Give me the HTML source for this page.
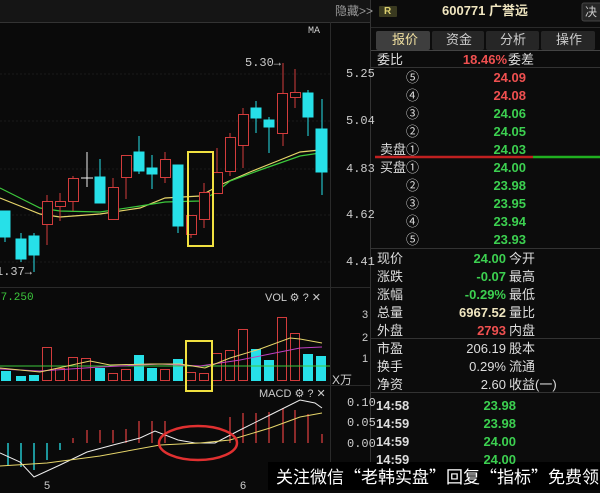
<!DOCTYPE html>
<html><head><meta charset="utf-8"><style>
html,body{margin:0;padding:0;background:#0a0a0a;}
body{width:600px;height:490px;position:relative;overflow:hidden;font-family:"Liberation Sans","Noto Sans CJK SC",sans-serif;}
.t{position:absolute;white-space:nowrap;font-size:12px;line-height:14px;}
.r{text-align:right;}
</style></head><body>
<svg width="600" height="490" style="position:absolute;left:0;top:0" xmlns="http://www.w3.org/2000/svg">
<rect x="0" y="0" width="370" height="22" fill="#151515"/>
<line x1="0" y1="22.5" x2="370" y2="22.5" stroke="#333"/>
<line x1="330.5" y1="22" x2="330.5" y2="490" stroke="#2a2a2a"/>
<line x1="0" y1="287.5" x2="370" y2="287.5" stroke="#2a2a2a"/>
<line x1="0" y1="385.5" x2="370" y2="385.5" stroke="#2a2a2a"/>
<line x1="370.5" y1="0" x2="370.5" y2="490" stroke="#333"/>
<g stroke="#1a1a1a" stroke-dasharray="2,2">
<line x1="0" y1="74" x2="330" y2="74"/><line x1="0" y1="121" x2="330" y2="121"/><line x1="0" y1="169" x2="330" y2="169"/><line x1="0" y1="215" x2="330" y2="215"/><line x1="0" y1="262" x2="330" y2="262"/>
</g>
<polyline fill="none" stroke="#e6d56a" stroke-width="1.2" points="0,198 20,206 40,214 60,217 100,214 140,208 165,198 200,196 220,185 250,172 280,160 300,152 320,150"/>
<polyline fill="none" stroke="#3cc83c" stroke-width="1.2" points="0,188 20,198 40,208 60,211 100,212 140,206 165,202 200,201 215,193 230,181 260,170 300,156 320,153"/>
<g stroke-width="1">
<g fill="#27e0e8" stroke="#27e0e8">
<line x1="5" y1="211" x2="5" y2="242"/><rect x="0" y="211" width="10" height="26"/>
<line x1="21" y1="233" x2="21" y2="262"/><rect x="16" y="239" width="10" height="20"/>
<line x1="34" y1="233" x2="34" y2="272"/><rect x="29" y="236" width="10" height="19"/>
<line x1="100" y1="159" x2="100" y2="203"/><rect x="95" y="177" width="10" height="26"/>
<line x1="139" y1="136" x2="139" y2="174"/><rect x="134" y="152" width="10" height="19"/>
<line x1="152" y1="155" x2="152" y2="189"/><rect x="147" y="168" width="10" height="6"/>
<line x1="178" y1="165" x2="178" y2="233"/><rect x="173" y="165" width="10" height="61"/>
<line x1="256" y1="101" x2="256" y2="133"/><rect x="251" y="108" width="10" height="10"/>
<line x1="269" y1="117" x2="269" y2="153"/><rect x="264" y="120" width="10" height="7"/>
<line x1="308" y1="90" x2="308" y2="136"/><rect x="303" y="93" width="10" height="24"/>
<line x1="322" y1="99" x2="322" y2="195"/><rect x="316" y="129" width="11" height="43"/>
</g>
<g fill="#0a0a0a" stroke="#d23c3c">
<line x1="47" y1="195" x2="47" y2="245"/><rect x="42.5" y="201.5" width="10" height="23"/>
<line x1="60" y1="193" x2="60" y2="221"/><rect x="55.5" y="201.5" width="10" height="5"/>
<line x1="73" y1="176" x2="73" y2="211"/><rect x="68.5" y="178.5" width="10" height="23"/>
<line x1="113" y1="178" x2="113" y2="219"/><rect x="108.5" y="187.5" width="10" height="32"/>
<line x1="126" y1="155" x2="126" y2="199"/><rect x="121.5" y="155.5" width="10" height="22"/>
<line x1="165" y1="152" x2="165" y2="183"/><rect x="160.5" y="159.5" width="10" height="18"/>
<line x1="191" y1="215" x2="191" y2="238"/><rect x="186.5" y="215.5" width="10" height="19"/>
<line x1="204" y1="183" x2="204" y2="228"/><rect x="199.5" y="192.5" width="10" height="27"/>
<line x1="217" y1="148" x2="217" y2="193"/><rect x="212.5" y="172.5" width="10" height="21"/>
<line x1="230" y1="133" x2="230" y2="176"/><rect x="225.5" y="137.5" width="10" height="34"/>
<line x1="243" y1="108" x2="243" y2="168"/><rect x="238.5" y="114.5" width="10" height="31"/>
<line x1="283" y1="63" x2="283" y2="146"/><rect x="277.5" y="93.5" width="10" height="40"/>
<line x1="295" y1="69" x2="295" y2="108"/><rect x="290.5" y="92.5" width="10" height="5"/>
</g>
<line x1="87" y1="152" x2="87" y2="187" stroke="#eee"/><line x1="81" y1="178" x2="93" y2="178" stroke="#eee"/>
</g>
<rect x="188" y="152" width="25" height="94" fill="none" stroke="#f0e040" stroke-width="2"/>
<g fill="#27e0e8">
<rect x="1" y="371" width="10" height="10"/><rect x="16" y="376" width="10" height="5"/><rect x="29" y="375" width="10" height="6"/>
<rect x="95" y="368" width="10" height="13"/><rect x="134" y="355" width="10" height="26"/><rect x="147" y="368" width="10" height="13"/>
<rect x="173" y="359" width="10" height="22"/><rect x="251" y="349" width="10" height="32"/><rect x="264" y="360" width="10" height="21"/>
<rect x="303" y="354" width="10" height="27"/><rect x="316" y="356" width="10" height="25"/>
</g>
<g fill="none" stroke="#d23c3c">
<rect x="42.5" y="347.5" width="9" height="33"/><rect x="55.5" y="368.5" width="9" height="12"/><rect x="68.5" y="357.5" width="9" height="23"/>
<rect x="81.5" y="358.5" width="9" height="22"/><rect x="108.5" y="373.5" width="9" height="7"/><rect x="121.5" y="369.5" width="9" height="11"/>
<rect x="160.5" y="369.5" width="9" height="11"/><rect x="186.5" y="372.5" width="9" height="8"/><rect x="199.5" y="373.5" width="9" height="7"/>
<rect x="212.5" y="353.5" width="9" height="27"/><rect x="225.5" y="350.5" width="9" height="30"/><rect x="238.5" y="329.5" width="9" height="51"/>
<rect x="277.5" y="317.5" width="9" height="63"/><rect x="290.5" y="333.5" width="9" height="47"/>
</g>
<polyline fill="none" stroke="#3cc83c" points="0,366 330,366"/>
<polyline fill="none" stroke="#c040c0" points="0,369 40,371 100,367 160,364 200,366 240,360 270,354 300,348 322,347"/>
<polyline fill="none" stroke="#e6d56a" points="0,368 40,372 90,361 110,365 150,364 180,364 205,368 230,358 260,349 290,338 300,339 322,343"/>
<rect x="186" y="341" width="26" height="50" fill="none" stroke="#f0e040" stroke-width="2"/>
<g stroke="#27e0e8" stroke-width="1.3"><line x1="8" y1="443" x2="8" y2="465"/><line x1="21" y1="443" x2="21" y2="467"/><line x1="34" y1="443" x2="34" y2="470"/><line x1="47" y1="443" x2="47" y2="460"/><line x1="60" y1="443" x2="60" y2="450"/></g>
<g stroke="#d23c3c" stroke-width="1.3">
<line x1="73" y1="443" x2="73" y2="438"/><line x1="87" y1="443" x2="87" y2="430"/><line x1="100" y1="443" x2="100" y2="430"/><line x1="113" y1="443" x2="113" y2="430"/><line x1="126" y1="443" x2="126" y2="429"/><line x1="139" y1="443" x2="139" y2="421"/><line x1="152" y1="443" x2="152" y2="421"/><line x1="165" y1="443" x2="165" y2="421"/><line x1="230" y1="443" x2="230" y2="417"/><line x1="243" y1="443" x2="243" y2="413"/><line x1="256" y1="443" x2="256" y2="413"/><line x1="269" y1="443" x2="269" y2="412"/><line x1="283" y1="443" x2="283" y2="408"/><line x1="295" y1="443" x2="295" y2="410"/><line x1="308" y1="443" x2="308" y2="414"/><line x1="322" y1="443" x2="322" y2="434"/>
</g>
<polyline fill="none" stroke="#eee" points="0,453 20,462 34,477 60,465 87,452 113,445 140,438 155,431 178,440 195,443 215,443 240,430 270,415 300,400 315,403 322,408"/>
<polyline fill="none" stroke="#e6d56a" points="0,466 47,463 100,456 160,445 200,443 230,440 270,428 300,417 322,413"/>
<ellipse cx="198" cy="443" rx="39" ry="17" fill="none" stroke="#e03030" stroke-width="2.5"/>
<rect x="371" y="0" width="229" height="490" fill="#0c0c0c"/>
<rect x="379" y="6" width="18" height="11" rx="1" fill="#3a3a20"/>
<rect x="582" y="3" width="20" height="18" rx="2" fill="#262626" stroke="#444"/>
<line x1="371" y1="27.5" x2="600" y2="27.5" stroke="#2a2a2a"/>
<rect x="376" y="31" width="54" height="19" rx="2" fill="#3e3e3e"/>
<rect x="432" y="31" width="52" height="19" rx="2" fill="#262626"/>
<rect x="486" y="31" width="53" height="19" rx="2" fill="#262626"/>
<rect x="541" y="31" width="54" height="19" rx="2" fill="#262626"/>
<line x1="371" y1="50.5" x2="600" y2="50.5" stroke="#444"/>
<line x1="371" y1="67.5" x2="600" y2="67.5" stroke="#333"/>
<line x1="375" y1="157" x2="533" y2="157" stroke="#c02020" stroke-width="2.5"/>
<line x1="533" y1="157" x2="600" y2="157" stroke="#20b020" stroke-width="2.5"/>
<line x1="371" y1="248.5" x2="600" y2="248.5" stroke="#333"/>
<line x1="371" y1="338.5" x2="600" y2="338.5" stroke="#333"/>
<line x1="371" y1="392.5" x2="600" y2="392.5" stroke="#333"/>
<rect x="268" y="462" width="332" height="28" fill="#000"/>
</svg>
<div class="t" style="left:335px;top:4px;color:#999">隐藏&gt;&gt;</div>
<div class="t" style="left:308px;top:25px;color:#ccc;font-size:10px;font-family:'Liberation Mono',monospace">MA</div>
<div class="t" style="left:245px;top:56px;color:#ccc;font-family:'Liberation Mono',monospace">5.30→</div>
<div class="t" style="left:-4px;top:265px;color:#ccc;font-family:'Liberation Mono',monospace">1.37→</div>
<div class="t" style="left:346px;top:67px;color:#ccc;font-family:'Liberation Mono',monospace">5.25</div>
<div class="t" style="left:346px;top:114px;color:#ccc;font-family:'Liberation Mono',monospace">5.04</div>
<div class="t" style="left:346px;top:162px;color:#ccc;font-family:'Liberation Mono',monospace">4.83</div>
<div class="t" style="left:346px;top:208px;color:#ccc;font-family:'Liberation Mono',monospace">4.62</div>
<div class="t" style="left:346px;top:255px;color:#ccc;font-family:'Liberation Mono',monospace">4.41</div>
<div class="t" style="left:-6px;top:291px;color:#3cc83c;font-size:11px;font-family:'Liberation Mono',monospace">77.250</div>
<div class="t" style="left:265px;top:291px;color:#ccc;font-size:11px">VOL ⚙ ? ✕</div>
<div class="t" style="left:362px;top:308px;color:#ccc;font-size:11px">3</div>
<div class="t" style="left:362px;top:331px;color:#ccc;font-size:11px">2</div>
<div class="t" style="left:362px;top:352px;color:#ccc;font-size:11px">1</div>
<div class="t" style="left:332px;top:373px;color:#ccc">X万</div>
<div class="t" style="left:259px;top:387px;color:#ccc;font-size:11px">MACD ⚙ ? ✕</div>
<div class="t" style="left:347px;top:396px;color:#ccc;font-family:'Liberation Mono',monospace">0.10</div>
<div class="t" style="left:347px;top:416px;color:#ccc;font-family:'Liberation Mono',monospace">0.05</div>
<div class="t" style="left:347px;top:437px;color:#ccc;font-family:'Liberation Mono',monospace">0.00</div>
<div class="t" style="left:44px;top:479px;color:#ccc;font-size:11px">5</div>
<div class="t" style="left:240px;top:479px;color:#ccc;font-size:11px">6</div>
<div class="t" style="left:384px;top:5px;color:#dcd070;font-size:10px;font-weight:bold">R</div>
<div class="t" style="left:442px;top:4px;color:#f0e6c0;font-size:13px;font-weight:bold">600771 广誉远</div>
<div class="t" style="left:585px;top:5px;color:#ccc">决</div>
<div class="t" style="left:392px;top:33px;color:#f0e0a0;font-size:13px">报价</div>
<div class="t" style="left:446px;top:33px;color:#ccc;font-size:13px">资金</div>
<div class="t" style="left:500px;top:33px;color:#ccc;font-size:13px">分析</div>
<div class="t" style="left:556px;top:33px;color:#ccc;font-size:13px">操作</div>
<div class="t" style="left:377px;top:53px;color:#ddd;font-size:13px">委比</div>
<div class="t r" style="left:440px;width:67px;top:53px;color:#f05050;font-size:13px;font-weight:bold">18.46%</div>
<div class="t" style="left:508px;top:53px;color:#ddd;font-size:13px">委差</div>
<div style="position:absolute;left:376px;top:69px;font-size:13px;line-height:18px;color:#ddd;width:43px;text-align:right">⑤<br>④<br>③<br>②<br>卖盘①<br>买盘①<br>②<br>③<br>④<br>⑤</div>
<div style="position:absolute;left:460px;top:69px;font-size:13px;line-height:18px;width:66px;text-align:right;font-weight:bold;color:#3cd050"><span style="color:#f05050">24.09</span><br><span style="color:#f05050">24.08</span><br>24.06<br>24.05<br>24.03<br>24.00<br>23.98<br>23.95<br>23.94<br>23.93</div>
<div style="position:absolute;left:377px;top:250px;font-size:13px;line-height:18px;color:#ddd">现价<br>涨跌<br>涨幅<br>总量<br>外盘</div>
<div style="position:absolute;left:440px;top:250px;font-size:13px;line-height:18px;width:66px;text-align:right;font-weight:bold;color:#3cd050">24.00<br>-0.07<br>-0.29%<br><span style="color:#f0e6c0">6967.52</span><br><span style="color:#f05050">2793</span></div>
<div style="position:absolute;left:509px;top:250px;font-size:13px;line-height:18px;color:#ddd">今开<br>最高<br>最低<br>量比<br>内盘</div>
<div style="position:absolute;left:377px;top:340px;font-size:13px;line-height:18px;color:#ddd">市盈<br>换手<br>净资</div>
<div style="position:absolute;left:440px;top:340px;font-size:13px;line-height:18px;width:66px;text-align:right;color:#ddd">206.19<br>0.29%<br>2.60</div>
<div style="position:absolute;left:509px;top:340px;font-size:13px;line-height:18px;color:#ddd">股本<br>流通<br>收益(一)</div>
<div style="position:absolute;left:376px;top:397px;font-size:13px;line-height:18px;color:#ddd;font-weight:bold">14:58<br>14:59<br>14:59<br>14:59</div>
<div style="position:absolute;left:450px;top:397px;font-size:13px;line-height:18px;width:66px;text-align:right;color:#3cd050;font-weight:bold">23.98<br>23.98<br>24.00<br>24.00</div>
<div class="t" style="left:276px;top:465px;color:#fff;font-size:17px;line-height:22px;background:#000;padding-right:20px;font-family:'Noto Sans CJK SC',sans-serif">关注微信“老韩实盘”回复“指标”免费领</div>
</body></html>
